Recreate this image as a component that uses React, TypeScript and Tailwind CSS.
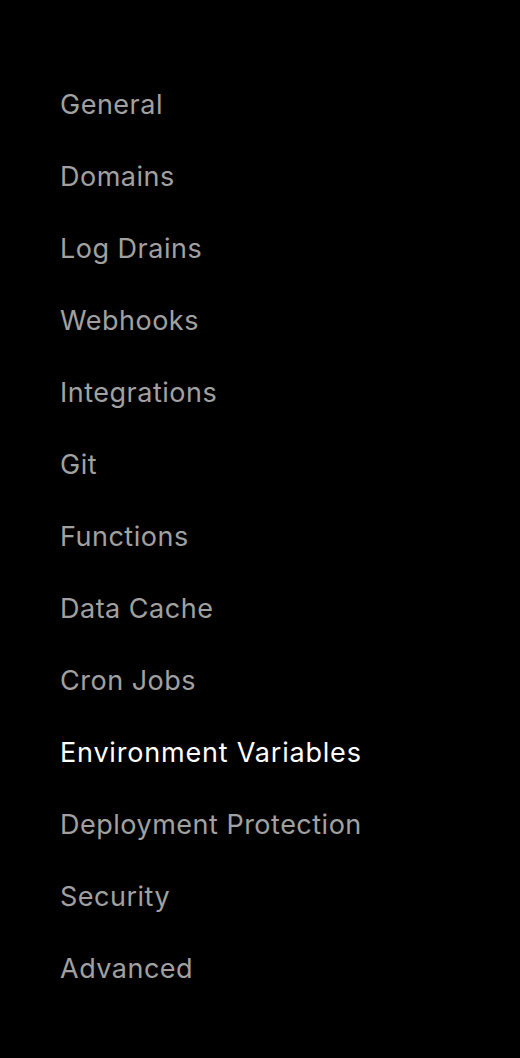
export default function App() {
  const items = [
    "General",
    "Domains",
    "Log Drains",
    "Webhooks",
    "Integrations",
    "Git",
    "Functions",
    "Data Cache",
    "Cron Jobs",
    "Environment Variables",
    "Deployment Protection",
    "Security",
    "Advanced",
  ];
  return (
    <div className="min-h-[1058px] w-[520px] bg-black pt-[68px] pl-[60px]" style={{ fontFamily: "Inter, 'Noto Sans', sans-serif" }}>
      <nav className="flex flex-col">
        {items.map((it) => (
          <a
            key={it}
            className={`flex h-[72px] items-center text-[27px] leading-none ${
              it === "Environment Variables" ? "text-white font-normal tracking-[0.8px]" : "text-[#a1a1a1] tracking-[0.5px]"
            }`}
          >
            {it}
          </a>
        ))}
      </nav>
    </div>
  );
}
